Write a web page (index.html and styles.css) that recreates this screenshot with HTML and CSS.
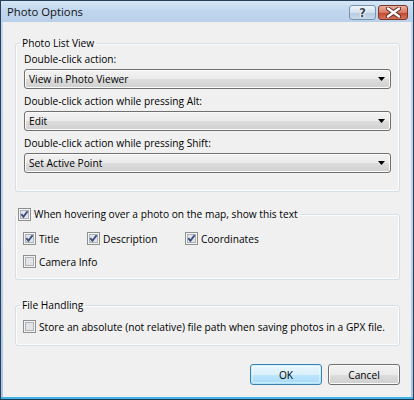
FILE: index.html
```html
<!DOCTYPE html>
<html lang="en">
<head>
    <meta charset="UTF-8">
    <meta name="viewport" content="width=device-width, initial-scale=1.0">
    <title>Photo Options</title>
    <link rel="stylesheet" href="styles.css">
</head>
<body>
<div class="window">
    <div class="titlebar">
        <span class="title">Photo Options</span>
        <div class="caption-buttons">
            <span class="caption-btn help">?</span>
            <span class="caption-btn close">
                <svg width="15" height="11" viewBox="0 0 15 11">
                    <path d="M2 1.5 L13 9.5 M13 1.5 L2 9.5" stroke="#5a2a22" stroke-width="4.2" stroke-linecap="round"/>
                    <path d="M2 1.5 L13 9.5 M13 1.5 L2 9.5" stroke="#ffffff" stroke-width="2.4" stroke-linecap="round"/>
                </svg>
            </span>
        </div>
    </div>

    <div class="client">
        <!-- Photo List View -->
        <fieldset class="group list-view">
            <legend>Photo List View</legend>
            <div class="field-label">Double-click action:</div>
            <div class="combo">
                <span>View in Photo Viewer</span>
                <svg class="arrow" width="7" height="4" viewBox="0 0 7 4"><path d="M0 0 H7 L3.5 4 Z" fill="#000"/></svg>
            </div>
            <div class="field-label">Double-click action while pressing Alt:</div>
            <div class="combo">
                <span>Edit</span>
                <svg class="arrow" width="7" height="4" viewBox="0 0 7 4"><path d="M0 0 H7 L3.5 4 Z" fill="#000"/></svg>
            </div>
            <div class="field-label">Double-click action while pressing Shift:</div>
            <div class="combo">
                <span>Set Active Point</span>
                <svg class="arrow" width="7" height="4" viewBox="0 0 7 4"><path d="M0 0 H7 L3.5 4 Z" fill="#000"/></svg>
            </div>
        </fieldset>

        <!-- hover text -->
        <fieldset class="group hover-text">
            <legend class="check-legend">
                <svg class="cb" width="13" height="13" viewBox="0 0 13 13">
                    <rect x="0.5" y="0.5" width="12" height="12" fill="#f4f4f4" stroke="#8e8f8f"/>
                    <rect x="2.5" y="2.5" width="8" height="8" fill="#e2e4e7" stroke="#aeb2b7"/>
                    <path d="M3.3 6.2 L5.4 8.8 L9.6 3.2" fill="none" stroke="#3b4d82" stroke-width="1.9"/>
                </svg>
                <span>When hovering over a photo on the map, show this text</span>
            </legend>
            <div class="check-grid">
                <div class="check">
                    <svg class="cb" width="13" height="13" viewBox="0 0 13 13">
                        <rect x="0.5" y="0.5" width="12" height="12" fill="#f4f4f4" stroke="#8e8f8f"/>
                        <rect x="2.5" y="2.5" width="8" height="8" fill="#e2e4e7" stroke="#aeb2b7"/>
                        <path d="M3.3 6.2 L5.4 8.8 L9.6 3.2" fill="none" stroke="#3b4d82" stroke-width="1.9"/>
                    </svg>
                    <span>Title</span>
                </div>
                <div class="check">
                    <svg class="cb" width="13" height="13" viewBox="0 0 13 13">
                        <rect x="0.5" y="0.5" width="12" height="12" fill="#f4f4f4" stroke="#8e8f8f"/>
                        <rect x="2.5" y="2.5" width="8" height="8" fill="#e2e4e7" stroke="#aeb2b7"/>
                        <path d="M3.3 6.2 L5.4 8.8 L9.6 3.2" fill="none" stroke="#3b4d82" stroke-width="1.9"/>
                    </svg>
                    <span>Description</span>
                </div>
                <div class="check">
                    <svg class="cb" width="13" height="13" viewBox="0 0 13 13">
                        <rect x="0.5" y="0.5" width="12" height="12" fill="#f4f4f4" stroke="#8e8f8f"/>
                        <rect x="2.5" y="2.5" width="8" height="8" fill="#e2e4e7" stroke="#aeb2b7"/>
                        <path d="M3.3 6.2 L5.4 8.8 L9.6 3.2" fill="none" stroke="#3b4d82" stroke-width="1.9"/>
                    </svg>
                    <span>Coordinates</span>
                </div>
                <div class="check">
                    <svg class="cb" width="13" height="13" viewBox="0 0 13 13">
                        <rect x="0.5" y="0.5" width="12" height="12" fill="#f4f4f4" stroke="#8e8f8f"/>
                        <rect x="2.5" y="2.5" width="8" height="8" fill="#e2e4e7" stroke="#aeb2b7"/>
                    </svg>
                    <span>Camera Info</span>
                </div>
            </div>
        </fieldset>

        <!-- File Handling -->
        <fieldset class="group files">
            <legend>File Handling</legend>
            <div class="check">
                <svg class="cb" width="13" height="13" viewBox="0 0 13 13">
                    <rect x="0.5" y="0.5" width="12" height="12" fill="#f4f4f4" stroke="#8e8f8f"/>
                    <rect x="2.5" y="2.5" width="8" height="8" fill="#e2e4e7" stroke="#aeb2b7"/>
                </svg>
                <span>Store an absolute (not relative) file path when saving photos in a GPX file.</span>
            </div>
        </fieldset>

        <div class="dialog-buttons">
            <button class="btn default">OK</button>
            <button class="btn">Cancel</button>
        </div>
    </div>
</div>
</body>
</html>
```

FILE: styles.css
```css
body {
    margin: 0;
    padding: 0;
    font-family: "Open Sans", "Noto Sans", sans-serif;
    font-size: 10.2px;
    color: #000;
    background-color: #f0f0f0;
}
.window {
    width: 414px;
    height: 400px;
    box-sizing: border-box;
    display: flex;
    flex-direction: column;
    border: 1px solid #263f5a;
    border-bottom-color: #1d3a55;
    padding: 0 2px 2px 2px;
    background: linear-gradient(#c2d8ee, #bcd3ea 60%, #a9c6e3);
    box-shadow: inset 0 -2px 0 #3db3e5;
}
.titlebar {
    height: 21px;
    margin: 0 -2px;
    padding: 0 5px 0 6px;
    display: flex;
    align-items: flex-start;
    justify-content: space-between;
    background: linear-gradient(#d6e6f6, #c1d7ee 45%, #b9d0e9);
}
.title {
    font-size: 11.3px;
    line-height: 22px;
    color: #111;
}
.caption-buttons {
    display: flex;
    gap: 2px;
    margin-top: 4px;
}
.caption-btn {
    height: 15px;
    box-sizing: border-box;
    border-radius: 3px;
    display: flex;
    align-items: center;
    justify-content: center;
}
.help {
    width: 27px;
    border: 1px solid #7a93ad;
    background: linear-gradient(#eef4fa, #d3e1ef 50%, #b7cbe0 51%, #c7d8ea);
    font-family: "DejaVu Sans", sans-serif;
    font-weight: bold;
    font-size: 12px;
    color: #3e4a57;
    text-shadow: 0 0 1px #fff, 1px 0 0 #fff, -1px 0 0 #fff;
}
.close {
    width: 30px;
    border: 1px solid #7e3427;
    background: linear-gradient(#eab09f, #d77a62 50%, #c0452c 51%, #d3745a);
}
.client {
    flex: 1;
    display: flex;
    flex-direction: column;
    background-color: #f0f0f0;
    padding: 13px 0 12px 0;
    box-sizing: border-box;
}
.group {
    margin: 0 11px 0 12px;
    padding: 0 8px 0 8px;
    border: 1px solid #d5dfe5;
    border-radius: 3px;
    min-width: 0;
    box-shadow: inset 0 0 0 1px #fafcfd;
}
.group legend {
    padding: 0 2px;
    margin-left: -4px;
    line-height: 16px;
}
.list-view {
    padding-bottom: 18px;
}
.field-label {
    line-height: 16px;
    margin-top: 4px;
}
.list-view legend + .field-label {
    margin-top: 0;
}
.combo {
    height: 20px;
    margin-top: 2px;
    box-sizing: border-box;
    border: 1px solid #707070;
    border-radius: 3px;
    padding: 0 4px 0 4px;
    display: flex;
    align-items: center;
    justify-content: space-between;
    background: linear-gradient(#f2f2f2, #ebebeb 50%, #dddddd 51%, #cfcfcf);
    box-shadow: inset 0 0 0 1px #fbfbfb;
}
.combo .arrow {
    margin-right: 1px;
}
.hover-text {
    margin-top: 14px;
    padding: 0 7px 9px 7px;
}
.check-legend {
    display: flex;
    align-items: center;
    gap: 3px;
}
.group .check-legend {
    margin-left: -7px;
}
.check-grid {
    display: grid;
    grid-template-columns: 64px 98px auto;
    row-gap: 6px;
    margin-top: 8px;
}
.check {
    display: flex;
    align-items: center;
    gap: 3px;
    height: 17px;
    white-space: nowrap;
}
.cb {
    flex: none;
}
.files {
    margin-top: 17px;
    padding: 0 7px 10px 7px;
}
.files .check {
    margin-top: 5px;
}
.group.files legend {
    margin-left: -3px;
}
.dialog-buttons {
    display: flex;
    justify-content: flex-end;
    gap: 6px;
    margin: 18px 11px 0 0;
}
.btn {
    width: 72px;
    height: 21px;
    padding: 0;
    font-family: inherit;
    font-size: 10.2px;
    color: #000;
    border: 1px solid #707070;
    border-radius: 3px;
    background: linear-gradient(#f2f2f2, #ebebeb 50%, #dddddd 51%, #cfcfcf);
    box-shadow: inset 0 0 0 1px #fbfbfb;
}
.btn.default {
    border-color: #3c7fb1;
    background: linear-gradient(#eaf6fd, #d9f0fc 50%, #bee6fd 51%, #a7d9f5);
    box-shadow: inset 0 0 0 1px #48d8fb33, inset 0 0 0 2px #ffffff66;
}
```
